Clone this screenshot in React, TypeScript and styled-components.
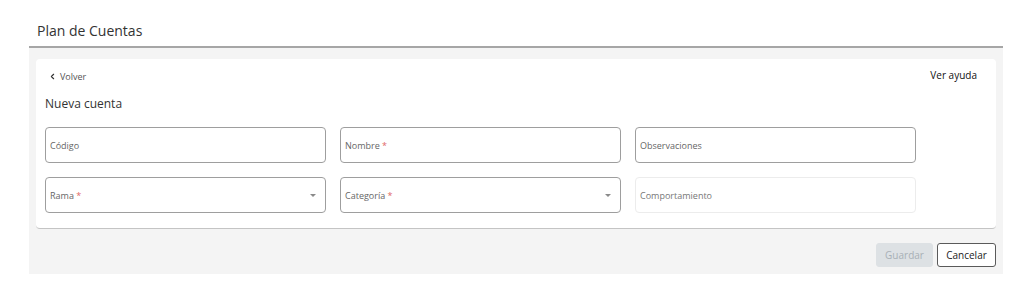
import React from 'react';
import styled, { createGlobalStyle } from 'styled-components';
import { ChevronLeft } from 'lucide-react';

const GlobalStyle = createGlobalStyle`
  body {
    margin: 0;
    background: #ffffff;
    font-family: "Open Sans", "Noto Sans", sans-serif;
    color: #333;
  }
`;

const Page = styled.div`
  width: 974px;
  padding-left: 29px;
`;

const Header = styled.div`
  height: 48px;
  padding: 20px 0 0 8px;
  box-sizing: border-box;
  border-bottom: 2px solid #a6a6a6;
  font-size: 14px;
  line-height: 22px;
  color: #333;
`;

const Section = styled.div`
  background: #f4f4f4;
  padding: 11px 7px 7px 7px;
`;

const Card = styled.div`
  background: #ffffff;
  border-radius: 4px;
  border-bottom: 1px solid #c4c4c4;
  padding: 10px 19px 15px 9px;
`;

const TopRow = styled.div`
  display: flex;
  justify-content: space-between;
  align-items: center;
  height: 14px;
`;

const BackLink = styled.a`
  display: flex;
  align-items: center;
  gap: 3px;
  padding-left: 3px;
  font-size: 9px;
  color: #555;
  text-decoration: none;
  cursor: pointer;
`;

const HelpLink = styled.a`
  font-size: 10px;
  font-weight: 500;
  color: #111;
  text-decoration: none;
  margin-top: -2px;
  cursor: pointer;
`;

const Subtitle = styled.div`
  margin-top: 12px;
  font-size: 12px;
  line-height: 18px;
  color: #333;
`;

const Grid = styled.div`
  margin-top: 14px;
  display: grid;
  grid-template-columns: repeat(3, 281px);
  column-gap: 14px;
  row-gap: 14px;
`;

const Field = styled.div<{ $disabled?: boolean }>`
  height: 36px;
  box-sizing: border-box;
  border: 1px solid ${p => (p.$disabled ? '#ececec' : '#9e9e9e')};
  border-radius: 4px;
  display: flex;
  align-items: center;
  justify-content: space-between;
  padding: 0 9px 0 4px;
  font-size: 9px;
  color: ${p => (p.$disabled ? '#777' : '#666')};
  background: #fff;
`;

const Required = styled.span`
  color: #e06666;
`;

const Caret = styled.span`
  width: 0;
  height: 0;
  border-left: 3px solid transparent;
  border-right: 3px solid transparent;
  border-top: 3px solid #8a8a8a;
`;

const Footer = styled.div`
  display: flex;
  justify-content: flex-end;
  gap: 4px;
  margin-top: 14px;
`;

const Button = styled.button<{ $primary?: boolean }>`
  height: 24px;
  box-sizing: border-box;
  padding: 0 8px;
  border-radius: 3px;
  font-family: "Open Sans", "Noto Sans", sans-serif;
  font-size: 10px;
  border: 1px solid ${p => (p.$primary ? '#dde1e4' : '#5a5a5a')};
  background: ${p => (p.$primary ? '#dde1e4' : '#ffffff')};
  color: ${p => (p.$primary ? '#a8b0b6' : '#222')};
  width: ${p => (p.$primary ? '57px' : '59px')};
`;

interface FieldProps {
  label: string;
  required?: boolean;
  select?: boolean;
  disabled?: boolean;
}

const FormField = ({ label, required, select, disabled }: FieldProps) => (
  <Field $disabled={disabled}>
    <span>
      {label}
      {required && <Required> *</Required>}
    </span>
    {select && <Caret />}
  </Field>
);

export default function App() {
  return (
    <Page>
      <GlobalStyle />
      <Header>Plan de Cuentas</Header>
      <Section>
        <Card>
          <TopRow>
            <BackLink>
              <ChevronLeft size={9} strokeWidth={3} color="#333" />
              Volver
            </BackLink>
            <HelpLink>Ver ayuda</HelpLink>
          </TopRow>
          <Subtitle>Nueva cuenta</Subtitle>
          <Grid>
            <FormField label="Código" />
            <FormField label="Nombre" required />
            <FormField label="Observaciones" />
            <FormField label="Rama" required select />
            <FormField label="Categoría" required select />
            <FormField label="Comportamiento" disabled />
          </Grid>
        </Card>
        <Footer>
          <Button $primary disabled>Guardar</Button>
          <Button>Cancelar</Button>
        </Footer>
      </Section>
    </Page>
  );
}
